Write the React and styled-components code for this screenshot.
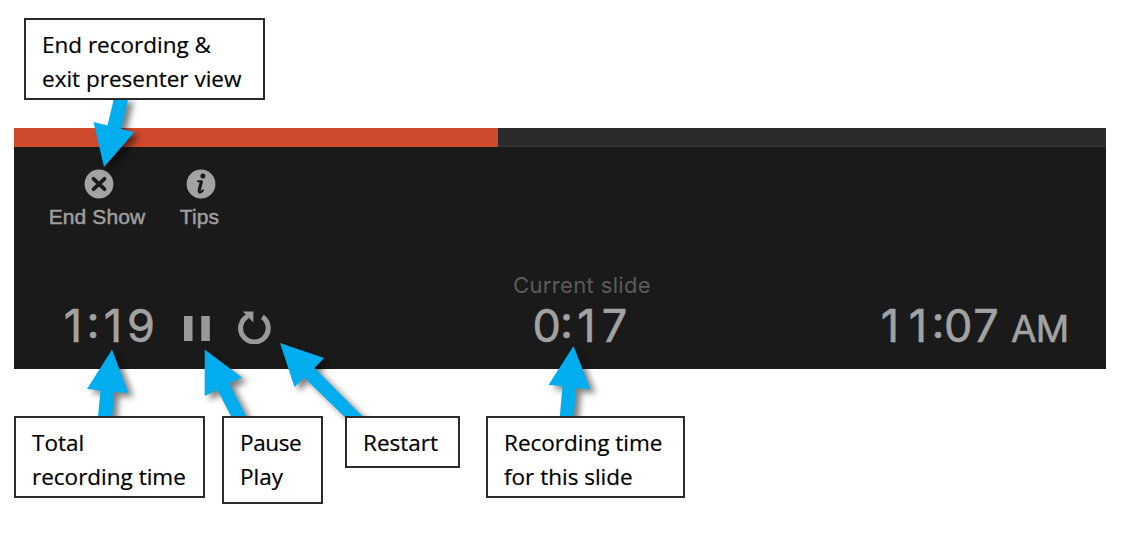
import React from "react";
import styled, { createGlobalStyle } from "styled-components";

const GlobalStyle = createGlobalStyle`
  body {
    margin: 0;
    background: #fff;
    overflow: hidden;
  }
`;

const Page = styled.main`
  position: relative;
  box-sizing: border-box;
  width: 1142px;
  height: 541px;
  padding: 18px 36px 0 14px;
  background: #fff;
`;

const Callout = styled.div`
  position: relative;
  z-index: 2;
  box-sizing: border-box;
  width: ${(p) => p.$width}px;
  height: ${(p) => p.$height}px;
  margin-left: ${(p) => p.$gap || 0}px;
  padding: 8px 0 0 16px;
  border: 2px solid #2a2a2a;
  background: #fff;
`;

const CalloutLine = styled.div`
  height: 33.5px;
  font: 400 22.5px/33.5px "Open Sans", "Noto Sans", sans-serif;
  letter-spacing: ${(p) => p.$spacing || 0}px;
  color: #000;
  -webkit-text-stroke: 0.2px #000;
  white-space: nowrap;
`;

const CalloutRow = styled.div`
  display: flex;
  align-items: flex-start;
  margin-top: 47px;
`;

const Panel = styled.section`
  display: flex;
  flex-direction: column;
  box-sizing: border-box;
  width: 1092px;
  height: 241px;
  margin-top: 28px;
  background: #1a1a1a;
`;

const Progress = styled.div`
  box-sizing: border-box;
  height: 19px;
  background: #2a2a2a;
  border-bottom: 2px solid #333;
`;

const ProgressFill = styled.div`
  width: 484px;
  height: 19px;
  background: #d04a30;
`;

const Toolbar = styled.div`
  display: flex;
  height: 125px;
  padding: 22px 0 0 34px;
  box-sizing: border-box;
`;

const Tool = styled.div`
  display: flex;
  flex-direction: column;
  align-items: center;
  width: ${(p) => p.$width}px;
  margin-right: 33px;

  svg {
    display: block;
    margin-left: 3px;
  }
`;

const ToolLabel = styled.span`
  margin-top: 6px;
  font: 400 21px/24px "Liberation Sans", Arial, sans-serif;
  letter-spacing: 0.1px;
  color: #9f9f9f;
  -webkit-text-stroke: 0.5px #9f9f9f;
  white-space: nowrap;
`;

const Status = styled.div`
  display: grid;
  grid-template-columns: 470px 196px 1fr;
  height: 97px;
`;

const Controls = styled.div`
  display: flex;
  align-items: flex-start;
  padding: 31px 0 0 45px;
`;

const Clock = styled.div`
  display: flex;
  height: 46px;
  font: 400 45px/46px Inter, sans-serif;
  color: #a2a2a2;
  -webkit-text-stroke: 0.6px #a2a2a2;
  white-space: nowrap;
`;

const Digit = styled.span`
  width: 28px;
  text-align: center;
`;

const Colon = styled.span`
  width: 12px;
  margin-top: -4px;
  display: flex;
  justify-content: center;
`;

const ControlIcon = styled.svg`
  display: block;
  flex: none;
  margin: ${(p) => p.$margin};
`;

const SlideTimer = styled.div`
  display: flex;
  flex-direction: column;
  align-items: center;

  ${Clock} {
    margin-right: 3px;
  }
`;

const SlideLabel = styled.div`
  height: 26px;
  margin-bottom: 5px;
  font: 400 22px/26px Inter, sans-serif;
  letter-spacing: 0.36px;
  color: #5b5b5b;
  white-space: nowrap;
`;

const WallClock = styled.div`
  display: flex;
  justify-content: flex-end;
  padding: 31px 38px 0 0;
`;

const Meridiem = styled.span`
  width: 57px;
  margin-left: 11px;
  font-size: 37px;
  line-height: 51px;
  letter-spacing: -0.8px;
`;

const Arrows = styled.svg`
  position: absolute;
  z-index: 1;
  inset: 0;
  filter: drop-shadow(5px 4px 3px rgba(0, 0, 0, 0.5));
`;

const arrows = [
  "104,167 93.5,122 107.5,125.5 114,98 128.5,98 121,129 134.5,132",
  "112,349.5 87,389 100.5,390.5 97.7,420 112,420 114,392 128.5,393",
  "204.7,349.5 204.7,396 217.5,390 233,420 248,420 229.5,383.5 242,377.5",
  "280,343 294.5,387 304,377.5 348,420 366,420 314.5,368 324,358",
  "573.5,346 548.5,385 562.5,386 559.5,420 573.5,420 576,388 590.5,389.5",
];

const CloseIcon = () => (
  <svg width="30" height="30" viewBox="0 0 30 30">
    <circle cx="15" cy="15" r="14.4" fill="#a3a3a3" />
    <path d="M9.5 9.8 20.5 20.2M20.5 9.8 9.5 20.2" stroke="#1a1a1a" strokeWidth="3.7" strokeLinecap="round" />
  </svg>
);

const InfoIcon = () => (
  <svg width="30" height="30" viewBox="0 0 30 30">
    <circle cx="15" cy="15" r="14.4" fill="#a3a3a3" />
    <circle cx="16.9" cy="6.9" r="2.5" fill="#1a1a1a" />
    <path d="M12 12.3h3.7l-2.5 9.1q-.6 2.5 1 2.1 1.6-.5 2.8-2.1" fill="none" stroke="#1a1a1a" strokeWidth="2.1" strokeLinejoin="round" strokeLinecap="round" />
    <path d="m15.4 12.5-2.5 9.8" stroke="#1a1a1a" strokeWidth="3.1" />
  </svg>
);

const Time = ({ value, suffix }) => (
  <Clock>
    {value.split("").map((ch, i) =>
      ch === ":" ? <Colon key={i}>{ch}</Colon> : <Digit key={i}>{ch}</Digit>
    )}
    {suffix && <Meridiem>{suffix}</Meridiem>}
  </Clock>
);

export default function App() {
  return (
    <>
      <GlobalStyle />
      <Page>
        <Callout $width={241} $height={82} $gap={10}>
          <CalloutLine>End recording &amp;</CalloutLine>
          <CalloutLine>exit presenter view</CalloutLine>
        </Callout>

        <Panel>
          <Progress>
            <ProgressFill />
          </Progress>
          <Toolbar>
            <Tool $width={98}>
              <CloseIcon />
              <ToolLabel>End Show</ToolLabel>
            </Tool>
            <Tool $width={41}>
              <InfoIcon />
              <ToolLabel>Tips</ToolLabel>
            </Tool>
          </Toolbar>
          <Status>
            <Controls>
              <Time value="1:19" />
              <ControlIcon $margin="13px 0 0 29px" width="26" height="25" viewBox="0 0 26 25">
                <path d="M0 0h8.5v25H0zM17.3 0h8.5v25h-8.5z" fill="#999" />
              </ControlIcon>
              <ControlIcon $margin="7px 0 0 27px" width="35" height="34" viewBox="0 0 35 34">
                <path d="M25.3 6.9A13.8 13.8 0 1 1 10.8 6.1" fill="none" stroke="#999" strokeWidth="5" />
                <path d="M5.9 1.4h10.5v11z" fill="#999" />
              </ControlIcon>
            </Controls>
            <SlideTimer>
              <SlideLabel>Current slide</SlideLabel>
              <Time value="0:17" />
            </SlideTimer>
            <WallClock>
              <Time value="11:07" suffix="AM" />
            </WallClock>
          </Status>
        </Panel>

        <CalloutRow>
          <Callout $width={191} $height={82}>
            <CalloutLine>Total</CalloutLine>
            <CalloutLine>recording time</CalloutLine>
          </Callout>
          <Callout $width={101} $height={88} $gap={17}>
            <CalloutLine $spacing={-0.4}>Pause</CalloutLine>
            <CalloutLine>Play</CalloutLine>
          </Callout>
          <Callout $width={115} $height={52} $gap={22}>
            <CalloutLine>Restart</CalloutLine>
          </Callout>
          <Callout $width={199} $height={82} $gap={26}>
            <CalloutLine>Recording time</CalloutLine>
            <CalloutLine>for this slide</CalloutLine>
          </Callout>
        </CalloutRow>

        <Arrows width="1142" height="541" viewBox="0 0 1142 541">
          {arrows.map((points) => (
            <polygon key={points} points={points} fill="#00aeef" />
          ))}
        </Arrows>
      </Page>
    </>
  );
}
